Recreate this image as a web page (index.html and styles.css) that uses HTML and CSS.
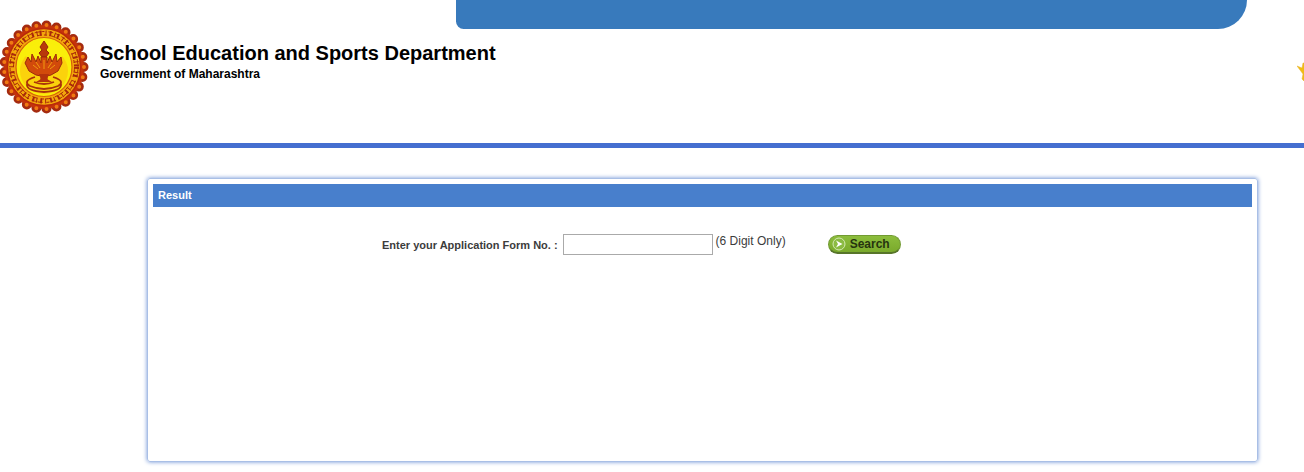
FILE: index.html
```html
<!DOCTYPE html>
<html lang="en">
<head>
    <meta charset="UTF-8">
    <meta name="viewport" content="width=device-width, initial-scale=1.0">
    <title>School Education and Sports Department</title>
    <link rel="stylesheet" href="styles.css">
</head>
<body>
    <header class="header">
        <div class="top-tab"></div>
        <div class="brand">
            <svg class="emblem" viewBox="0 0 90 94" role="img" aria-label="Government emblem">
                <!-- scalloped edge -->
                <ellipse class="beads-dark" cx="44" cy="47" rx="39.5" ry="41.5" pathLength="250"/>
                <ellipse cx="44" cy="47" rx="40" ry="42" fill="#c5330b"/>
                <ellipse class="beads-light" cx="44" cy="47" rx="40" ry="42" pathLength="250"/>
                <ellipse cx="44" cy="47" rx="36.500" ry="38.500" fill="#f4a80c" stroke="#b92a0a" stroke-width="1.5"/>
                <!-- ring of lettering -->
                <ellipse class="ring-marks" cx="44" cy="47" rx="32.500" ry="34"/>
                <ellipse class="ring-strokes" cx="44" cy="47" rx="30.500" ry="32"/>
                <ellipse class="ring-strokes" cx="44" cy="47" rx="34" ry="35.500"/>
                <ellipse cx="44" cy="47" rx="28" ry="29.500" fill="#f9ee0a" stroke="#d8600a" stroke-width="1.2"/>
                <ellipse cx="44" cy="51" rx="24" ry="23" fill="#fbd20c"/>
                <ellipse cx="44" cy="33" rx="19" ry="10" fill="#faee0a"/>
                <!-- lamp -->
                <path d="M44 21l4 6-2 3 3 3-3 4h-4l-3-4 3-3-2-3z" fill="#b8380b" stroke="#96260a"/>
                <path d="M28 37l3 5 1-8 4 8 2-6 3 7v-6h6v6l3-7 2 6 4-8 1 8 4-5 1 6-4 8-7 4-4 1v4h-6v-4l-5-1-7-4-4-8z" fill="#d24a0b" stroke="#9c290a"/>
                <path d="M33 45l5 4M36 42l4 6M55 45l-5 4M52 42l-4 6M44 40v9" fill="none" stroke="#f09a10"/>
                <path d="M39 54h10l-2 5 5 3H36l5-3z" fill="#b5330b"/>
                <path d="M35 57q-13 4-5 9q14 6 28 0q8-5-5-9M27 64q-1 7 17 8q18-1 17-8M34 62q10 4 20 0" fill="none" stroke="#a9330b" stroke-width="1.800"/>
            </svg>
            <div class="brand-text">
                <h1 class="department">School Education and Sports Department</h1>
                <p class="government">Government of Maharashtra</p>
            </div>
            <svg class="star" viewBox="0 0 7 20" aria-hidden="true">
                <path d="M0 4l5 2 1-5h1v18l-2-2 1-5z" fill="#f2bd12" stroke="#e6b32e" stroke-width=".5"/>
            </svg>
        </div>
    </header>

    <main class="content">
        <section class="panel">
            <h2 class="panel-title">Result</h2>
            <form class="search-form">
                <label class="form-label" for="form-no">Enter your Application Form No. :</label>
                <input class="form-input" type="text" id="form-no" maxlength="6">
                <span class="hint">(6 Digit Only)</span>
                <button class="search-button" type="submit">
                    <svg class="search-icon" viewBox="0 0 14 14" aria-hidden="true">
                        <circle cx="7" cy="7" r="6" fill="#8bbb42" stroke="#d5e9b3"/>
                        <path d="M4 3.5L10.5 7 4 10.500l2-3.500z" fill="#fff"/>
                    </svg>
                    Search
                </button>
            </form>
        </section>
    </main>
</body>
</html>
```
FILE: styles.css
```css
body {
    margin: 0;
    background-color: #fff;
    color: #3c3c3c;
    font-family: "Liberation Sans", Arial, sans-serif;
    font-size: 12px;
    overflow-x: hidden;
}

.header {
    border-bottom: 5px solid #456fd0;
}

.top-tab {
    height: 29px;
    margin-left: 35%;
    margin-right: 57px;
    background-color: #387abc;
    border-radius: 0 0 38px 10px;
}

.brand {
    display: flex;
    align-items: flex-start;
    height: 123px;
    margin-top: -9px;
}

.emblem {
    width: 90px;
    height: 94px;
}

.beads-dark,
.beads-light {
    fill: none;
    stroke-linecap: round;
    stroke-dasharray: 0 10;
}

.beads-dark {
    stroke: #a52b10;
    stroke-width: 10;
}

.beads-light {
    stroke: #f07a12;
    stroke-width: 4;
}

.ring-marks,
.ring-strokes {
    fill: none;
    stroke: #a8280a;
}

.ring-marks {
    stroke-width: 5;
    stroke-dasharray: 2 3 1 2 2 4 1 3;
}

.ring-strokes {
    stroke-width: 1;
    stroke-dasharray: 5 2 3 4;
}

.brand-text {
    flex: 1;
    padding: 21px 0 0 10px;
    color: #000;
}

.department {
    margin: 0;
    font-size: 20px;
    line-height: 24px;
}

.government {
    margin: 0;
    font-size: 12px;
    font-weight: bold;
    line-height: 18px;
}

.star {
    width: 7px;
    height: 20px;
    margin-top: 42px;
}

.content {
    padding: 30px 46px 10px 147px;
}

.panel {
    min-height: 272px;
    padding: 5px;
    border: 1px solid #a9bfe6;
    border-radius: 3px;
    box-shadow: 0 0 4px #6f93d6;
}

.panel-title {
    margin: 0;
    padding: 0 5px;
    background-color: #487fcc;
    color: #fff;
    font-size: 11px;
    line-height: 23px;
}

.search-form {
    display: flex;
    align-items: center;
    padding: 27px 0 0 229px;
}

.form-label {
    font-size: 11px;
    font-weight: bold;
}

.form-input {
    box-sizing: border-box;
    width: 150px;
    height: 21px;
    margin: 0 3px 0 5px;
    border: 1px solid #aaa;
    background-color: #fff;
}

.hint {
    padding-bottom: 7px;
}

.search-button {
    display: flex;
    align-items: center;
    gap: 4px;
    width: 73px;
    height: 19px;
    margin-left: 42px;
    padding: 0 3px;
    border: 1px solid #729b32;
    border-bottom: 2px solid #57752a;
    border-radius: 10px;
    background: linear-gradient(#8cbd3c, #7aaa2c);
    color: #26340f;
    font-family: inherit;
    font-size: 12px;
    font-weight: bold;
    cursor: pointer;
}

.search-icon {
    width: 14px;
    height: 14px;
}
```
